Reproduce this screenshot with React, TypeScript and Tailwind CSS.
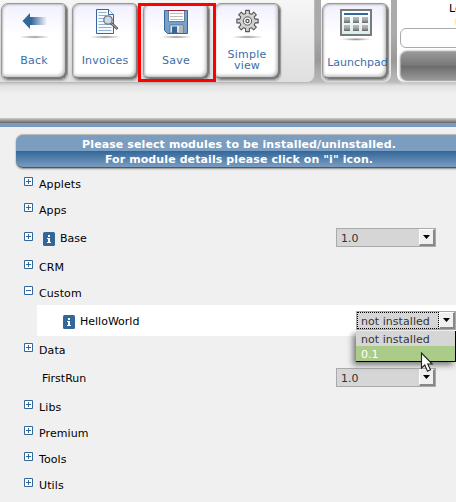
import type { ReactNode } from "react";

function Shade() {
  return (
    <ellipse cx="15.5" cy="30" rx="16" ry="1.7" fill="url(#iconShade)" />
  );
}

function BackIcon() {
  return (
    <svg className="block" width="32" height="33" viewBox="0 0 32 33">
      <defs>
        <linearGradient id="arrow" x1="0" x2="1">
          <stop offset="0.35" stopColor="#336699" />
          <stop offset="1" stopColor="#336699" stopOpacity="0" />
        </linearGradient>
        <radialGradient id="iconShade">
          <stop offset="0" stopColor="#888" />
          <stop offset="1" stopColor="#aaa" stopOpacity="0" />
        </radialGradient>
      </defs>
      <path d="M3.5 14 11 6v4h17v8H11v4z" fill="url(#arrow)" />
      <Shade />
    </svg>
  );
}

function InvoiceIcon() {
  return (
    <svg className="block" width="32" height="33" viewBox="0 0 32 33">
      <path d="M6.5 2.5h12l5 5v19h-17z" fill="#f7fafd" stroke="#336699" />
      <path d="M18.5 2.5v5h5" fill="#fff" stroke="#336699" />
      <path d="M8.5 5.5h8M8.5 8.5h8M8.5 11.5h13M8.5 14.5h13M8.5 17.5h13M8.5 20.5h13M8.5 23.5h13" stroke="#8fb0d4" />
      <path d="m21 16 6.5 6" stroke="#555" strokeWidth="2.6" />
      <path d="m21.5 16.5 5.5 5" stroke="#bbb" strokeWidth="1" />
      <circle cx="18" cy="13" r="4.2" fill="#c9dced" stroke="#777" strokeWidth="1.3" />
      <Shade />
    </svg>
  );
}

function SaveIcon() {
  return (
    <svg className="block" width="32" height="33" viewBox="0 0 32 33">
      <path d="M3.5 3.5h23v23h-20l-3-3z" fill="#79a0c9" stroke="#336699" />
      <path d="M7.5 3.5h16v11h-16z" fill="#fff" stroke="#5e7f9f" />
      <path d="M7 3.5h17" stroke="#a82026" />
      <path d="M9 6.5h13M9 9.5h13M9 12.5h13" stroke="#bbb" />
      <path d="M9 18h13v8H9z" fill="#e4e4e4" stroke="#336699" strokeWidth=".7" />
      <path d="M11 19.5h5V26h-5z" fill="#336699" />
      <path d="M18 18.5h4V26h-4z" fill="#b6b6b6" />
      <Shade />
    </svg>
  );
}

const TEETH = [0, 1, 2, 3, 4, 5, 6, 7];

const gearPath =
  TEETH.map((i) => {
    const corners: [number, number][] = [
      [7.8, -14],
      [10.8, -10],
      [10.8, 10],
      [7.8, 14],
    ];
    return corners
      .map(([r, deg], j) => {
        const a = ((deg + i * 45) * Math.PI) / 180;
        const x = (15.5 + r * Math.cos(a)).toFixed(2);
        const y = (14 + r * Math.sin(a)).toFixed(2);
        return `${i === 0 && j === 0 ? "M" : "L"}${x} ${y}`;
      })
      .join("");
  }).join("") + "Z";

function GearIcon() {
  return (
    <svg className="block" width="32" height="33" viewBox="0 0 32 33">
      <g fill="#d2d2d2" stroke="#555" strokeLinejoin="round">
        <path d={gearPath} strokeWidth="1.1" />
        <circle cx="15.5" cy="14" r="4.2" fill="#f0f0f0" />
        <circle cx="15.5" cy="14" r="1.6" fill="#fff" strokeWidth="1.2" />
      </g>
      <Shade />
    </svg>
  );
}

function LaunchpadIcon() {
  return (
    <svg className="block" width="32" height="33" viewBox="0 0 32 33">
      <defs>
        <linearGradient id="tile" x1="0" y1="0" x2="0" y2="1">
          <stop offset="0" stopColor="#bbb" />
          <stop offset="0.45" stopColor="#aaa" />
          <stop offset="1" stopColor="#666" />
        </linearGradient>
        <linearGradient id="screen" x1="0" y1="0" x2="0" y2="1">
          <stop offset="0" stopColor="#fff" />
          <stop offset="1" stopColor="#d5eeee" />
        </linearGradient>
      </defs>
      <path d="M1 1h30v25H1z" fill="url(#screen)" stroke="#7a7a7a" strokeWidth="2" />
      <path d="M4 4h24v2H4z" fill="#336699" />
      {[4, 13, 22].map((x) => (
        <g key={x} fill="url(#tile)">
          <rect x={x} y="8" width="6" height="6" />
          <rect x={x} y="16" width="6" height="6" />
        </g>
      ))}
      <ellipse cx="16" cy="30.3" rx="16" ry="1.7" fill="url(#iconShade)" />
    </svg>
  );
}

function ToolButton({ icon, children, low }: { icon: ReactNode; children: ReactNode; low?: boolean }) {
  return (
    <button
      className={`flex h-[77px] w-[67px] shrink-0 flex-col items-center rounded-[7px] border border-[#999] bg-linear-to-b from-[#f0f0ff] via-white via-40% to-white text-[11px] leading-[11px] text-[#3b6ea5] shadow-[inset_-2px_-2px_1px_#777,inset_-4px_-4px_3px_#ccc,inset_1px_1px_2px_#bbb,0_1px_2px_#aaa] ${low ? "pt-[5px] tracking-normal" : "pt-[3px] tracking-[0.2px]"}`}
    >
      {icon}
      <span className={`mt-[5px] flex h-[31px] w-full items-center justify-center text-center whitespace-nowrap ${low ? "pl-[4px]" : "pr-px"}`}>{children}</span>
    </button>
  );
}

function Toggle({ open }: { open?: boolean }) {
  return (
    <svg className="block shrink-0" width="9" height="9" viewBox="0 0 9 9">
      <path d="M.5.5h8v8h-8z" fill="#fff" stroke="#336699" />
      <path d={open ? "M2 4.5h5" : "M2 4.5h5M4.5 2v5"} stroke="#336699" />
    </svg>
  );
}

function Info() {
  return (
    <svg className="block shrink-0" width="12" height="14" viewBox="0 0 12 14">
      <rect width="12" height="14" rx="1.5" fill="#336699" />
      <path d="M5 3h2v2H5zM4 6h3v4h1v1H4v-1h1V7H4z" fill="#fff" />
    </svg>
  );
}

function Select({ value, focused }: { value: string; focused?: boolean }) {
  return (
    <div className="flex h-[19px] w-[100px] justify-between border border-[#aaa] bg-[#d6d6d6]">
      <span className={`flex flex-1 items-center border border-dotted pt-[2px] pl-[3px] leading-none tracking-[0.05px] whitespace-nowrap text-[#333] ${focused ? "border-black" : "border-transparent"}`}>
        {value}
      </span>
      <span className="flex w-4 items-center justify-center border-t border-r-2 border-b-2 border-l border-t-white border-r-[#888] border-b-[#888] border-l-white bg-[#f0f0f0]">
        <svg className="block" width="7" height="4" viewBox="0 0 7 4">
          <path d="M0 0h7L3.5 4z" fill="#000" />
        </svg>
      </span>
    </div>
  );
}

function Group({ name, open }: { name: string; open?: boolean }) {
  return (
    <div className="flex h-[26px] shrink-0 gap-[6px] pt-[7px] pl-6">
      <Toggle open={open} />
      <span className="pt-px leading-[13px] tracking-[0.1px]">{name}</span>
    </div>
  );
}

export default function App() {
  return (
    <div className="flex h-[502px] w-[456px] flex-col overflow-hidden bg-[#f0f0f0] font-['DejaVu_Sans',sans-serif] text-[11px] text-black">
      <header className="flex h-[118px] shrink-0 items-start bg-[linear-gradient(#aaa,#aaa_35px,#999_60px,#bbb_82px,#e2e2e2_86px,#f0f0f0_94px)]">
        <div className="relative flex h-[83px] w-[315px] shrink-0 gap-1 rounded-br-lg border-r border-b border-[#bbb] bg-linear-to-b from-[#f6f6f6] to-[#dfdfdf] pt-[3px] pl-px">
          <ToolButton icon={<BackIcon />}>Back</ToolButton>
          <ToolButton icon={<InvoiceIcon />}>Invoices</ToolButton>
          <ToolButton icon={<SaveIcon />}>Save</ToolButton>
          <ToolButton icon={<GearIcon />}>
            <span className="flex flex-col pb-[2px]">
              <span>Simple</span>
              <span>view</span>
            </span>
          </ToolButton>
          <div className="absolute top-[3px] left-[138px] h-[79px] w-[78px] border-3 border-[#ff0000]" />
        </div>
        <div className="ml-[6px] flex h-[83px] w-[70px] shrink-0 rounded-b-lg border-b border-[#ccc] bg-linear-to-b from-white to-[#e8e8e8] pt-[3px] pl-px">
          <ToolButton low icon={<LaunchpadIcon />}>Launchpad</ToolButton>
        </div>
        <div className="ml-[6px] flex h-[83px] w-[80px] shrink-0 flex-col rounded-bl-lg border-b border-[#ccc] bg-white pl-[3px]">
          <div className="flex h-7 flex-col pt-px leading-[13px]">
            <span className="pt-px pl-[49px]">Lo</span>
            <span className="pl-[54px] text-[#ffe58a]">u</span>
          </div>
          <div className="h-5 w-[120px] shrink-0 rounded-[6px] border border-[#aaa] bg-white" />
          <div className="mt-[3px] h-[30px] w-[120px] shrink-0 rounded-[7px] border border-[#aaa] bg-[linear-gradient(#999,#777_48%,#6b6b6b_50%,#999)] shadow-[0_0_2px_#888]" />
        </div>
      </header>
      <div className="h-[9px] shrink-0 border-b-4 border-[#7a9bbf] bg-linear-to-b from-[#d0d0d0] via-[#999] to-[#666]" />
      <div className="mt-[7px] ml-4 flex h-[34px] w-[460px] shrink-0 flex-col rounded-[7px] border-t border-b border-t-[#bbb] border-b-[#555] bg-[linear-gradient(#7a9dc0_16px,#336699_16px,#7a9dc0)] pt-[2px] pr-[14px] text-center font-bold tracking-[0.1px] text-white shadow-[0_1px_2px_#888]">
        <span className="h-[15px] leading-[16px]">Please select modules to be installed/uninstalled.</span>
        <span className="h-[15px] leading-[16px]">For module details please click on "i" icon.</span>
      </div>
      <main className="mt-[2px] flex flex-col">
        <Group name="Applets" />
        <Group name="Apps" />
        <div className="flex h-[31px] shrink-0 pl-6">
          <div className="pt-[10px]"><Toggle /></div>
          <div className="pt-[10px] pl-[10px]"><Info /></div>
          <span className="w-[276px] pt-[10px] pl-[5px] leading-[13px]">Base</span>
          <div className="pt-[6px] pl-[5px]"><Select value="1.0" /></div>
        </div>
        <Group name="CRM" />
        <Group name="Custom" open />
        <div className="ml-[37px] flex h-[31px] shrink-0 bg-white pl-[26px]">
          <div className="pt-[10px]"><Info /></div>
          <span className="w-[281px] pt-[10px] pl-[5px] leading-[13px]">HelloWorld</span>
          <div className="relative mt-[6px] h-[19px]">
            <Select value="not installed" focused />
            <div className="absolute top-[20px] left-0 z-10 w-[100px] border-r border-b border-black bg-[#d6d6d6] pt-px tracking-[0.05px] text-[#333] shadow-[-3px_3px_6px_#777]">
              <div className="h-[14px] pl-[5px] leading-[16px] whitespace-nowrap">not installed</div>
              <div className="h-[15px] bg-[#aacc88] pl-[5px] leading-[17px] text-white">0.1</div>
            </div>
            <svg className="absolute top-[41px] left-[64px] z-20" width="14" height="21" viewBox="0 0 14 21">
              <path d="M1.5 1v15l3.3-3 2.7 6.2 3-1.4-2.8-5.8h4.5z" fill="#fff" stroke="#222" strokeWidth="1.1" />
            </svg>
          </div>
        </div>
        <Group name="Data" />
        <div className="flex h-[31px] shrink-0 pl-[42px]">
          <span className="w-[294px] pt-[10px] leading-[13px]">FirstRun</span>
          <div className="pt-[6px]"><Select value="1.0" /></div>
        </div>
        <Group name="Libs" />
        <Group name="Premium" />
        <Group name="Tools" />
        <Group name="Utils" />
      </main>
    </div>
  );
}
